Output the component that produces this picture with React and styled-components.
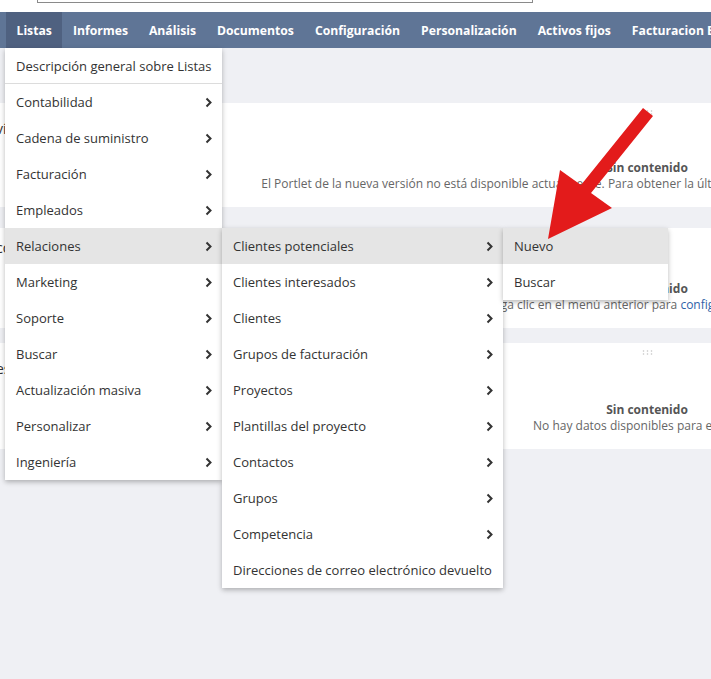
import React from "react";
import styled, { createGlobalStyle } from "styled-components";

const GlobalStyle = createGlobalStyle`
  html, body { margin: 0; padding: 0; overflow: hidden; background: #eff0f4; }
  body { font-family: "Open Sans", "Noto Sans", sans-serif; }
  * { box-sizing: border-box; }
`;

const Page = styled.div`
  position: relative;
  width: 711px;
  height: 679px;
  overflow: hidden;
  background: #eff0f4;
`;

const Header = styled.div`
  height: 12px;
  background: #ffffff;
  display: flex;
  align-items: flex-end;
  padding-left: 37px;
  overflow: hidden;
`;

const SearchBox = styled.div`
  width: 496px;
  height: 30px;
  flex: none;
  border: 1px solid #8a8a8a;
  margin-bottom: 9px;
  background: #fff;
`;

const NavBar = styled.nav`
  height: 36px;
  background: #5f7596;
  display: flex;
  padding-left: 6px;
  white-space: nowrap;
  position: relative;
  z-index: 5;
`;

const NavItem = styled.div`
  position: relative;
  display: flex;
  align-items: center;
  padding: 0 10.5px;
  color: #ffffff;
  font-weight: 700;
  font-size: 12.2px;
  background: ${(p) => (p.$active ? "#4f6180" : "transparent")};
`;

const Menu = styled.div`
  position: absolute;
  top: ${(p) => (p.$root ? "100%" : "0")};
  left: ${(p) => (p.$root ? "-1px" : "100%")};
  width: ${(p) => p.$width}px;
  background: #ffffff;
  box-shadow: 0 2px 5px rgba(0, 0, 0, 0.28);
  font-weight: 400;
  color: #333333;
  z-index: ${(p) => p.$z || 10};
`;

const Row = styled.div`
  position: relative;
  height: 36px;
  display: flex;
  align-items: center;
  justify-content: space-between;
  padding: 0 10px 0 11px;
  font-size: 13px;
  color: #333333;
  background: ${(p) => (p.$hover ? "#e5e5e5" : "#ffffff")};
  border-bottom: ${(p) => (p.$separated ? "1px solid #dcdcdc" : "none")};
`;

const Content = styled.main`
  display: flex;
  flex-direction: column;
  padding-top: 55px;
  width: 1294px;
`;

const Card = styled.section`
  position: relative;
  width: 1294px;
  height: ${(p) => p.$h}px;
  margin-bottom: ${(p) => p.$gap}px;
  background: #ffffff;
  display: flex;
  flex-direction: column;
  padding-bottom: 15px;
`;

const Dots = styled.div`
  display: flex;
  justify-content: center;
  padding-top: 7px;
  height: 11px;
`;

const CardTitle = styled.div`
  margin-top: ${(p) => p.$offset}px;
  margin-left: -4px;
  font-size: 14px;
  line-height: 20px;
  color: #333333;
`;

const Message = styled.div`
  margin-top: auto;
  text-align: center;
  font-size: 12px;
  line-height: 16px;
  color: #666666;
`;

const Empty = styled.div`
  font-weight: 700;
  color: #555555;
`;

const Link = styled.span`
  color: #2f62a8;
`;

const Overlay = styled.svg`
  position: absolute;
  left: 0;
  top: 0;
  pointer-events: none;
  z-index: 50;
`;

const Chevron = () => (
  <svg width="7" height="11" viewBox="0 0 7 11">
    <path d="M1.5 1.5 L5.5 5.5 L1.5 9.5" fill="none" stroke="#333" strokeWidth="2" strokeLinejoin="miter" />
  </svg>
);

const DragHandle = () => (
  <svg width="11" height="5" viewBox="0 0 11 5">
    {[1.5, 5.5, 9.5].map((x) =>
      [1, 4].map((y) => <circle key={`${x}-${y}`} cx={x} cy={y} r="0.8" fill="#c4c4c4" />)
    )}
  </svg>
);

const level3 = [
  { label: "Nuevo", hover: true },
  { label: "Buscar" },
];

const level2 = [
  { label: "Clientes potenciales", sub: true, hover: true, children: level3 },
  { label: "Clientes interesados", sub: true },
  { label: "Clientes", sub: true },
  { label: "Grupos de facturación", sub: true },
  { label: "Proyectos", sub: true },
  { label: "Plantillas del proyecto", sub: true },
  { label: "Contactos", sub: true },
  { label: "Grupos", sub: true },
  { label: "Competencia", sub: true },
  { label: "Direcciones de correo electrónico devuelto" },
];

const level1 = [
  { label: "Descripción general sobre Listas", separated: true },
  { label: "Contabilidad", sub: true },
  { label: "Cadena de suministro", sub: true },
  { label: "Facturación", sub: true },
  { label: "Empleados", sub: true },
  { label: "Relaciones", sub: true, hover: true, children: level2 },
  { label: "Marketing", sub: true },
  { label: "Soporte", sub: true },
  { label: "Buscar", sub: true },
  { label: "Actualización masiva", sub: true },
  { label: "Personalizar", sub: true },
  { label: "Ingeniería", sub: true },
];

const widths = [217, 281, 165];

function MenuList({ items, depth }) {
  return (
    <Menu $root={depth === 0} $width={widths[depth]} $z={10 + depth}>
      {items.map((it) => (
        <Row key={it.label} $hover={it.hover} $separated={it.separated}>
          <span>{it.label}</span>
          {it.sub && <Chevron />}
          {it.children && <MenuList items={it.children} depth={depth + 1} />}
        </Row>
      ))}
    </Menu>
  );
}

const navItems = [
  "Listas",
  "Informes",
  "Análisis",
  "Documentos",
  "Configuración",
  "Personalización",
  "Activos fijos",
  "Facturacion Electrónica",
];

export default function App() {
  return (
    <>
      <GlobalStyle />
      <Page>
        <Header>
          <SearchBox />
        </Header>
        <NavBar>
          {navItems.map((n, i) => (
            <NavItem key={n} $active={i === 0}>
              {n}
              {i === 0 && <MenuList items={level1} depth={0} />}
            </NavItem>
          ))}
        </NavBar>
        <Content>
          <Card $h={104} $gap={21}>
            <Dots><DragHandle /></Dots>
            <CardTitle $offset={5}>vínculos rápidos</CardTitle>
            <Message>
              <Empty>Sin contenido</Empty>
              El Portlet de la nueva versión no está disponible actualmente. Para obtener la última versión, comuníquese con el administrador de la red.
            </Message>
          </Card>
          <Card $h={100} $gap={15}>
            <Dots><DragHandle /></Dots>
            <CardTitle $offset={-1}>contactos recientes</CardTitle>
            <Message>
              <Empty>Sin contenido</Empty>
              Haga clic en el menú anterior para <Link>configurar este portlet.</Link>
            </Message>
          </Card>
          <Card $h={106} $gap={0}>
            <Dots><DragHandle /></Dots>
            <CardTitle $offset={5}>estadísticas</CardTitle>
            <Message>
              <Empty>Sin contenido</Empty>
              No hay datos disponibles para esta vista.
            </Message>
          </Card>
        </Content>
        <Overlay width="711" height="679" viewBox="0 0 711 679">
          <polygon
            points="643,108 653,116 591,193 612,208 548,239 560,170 581,185"
            fill="#e31b1b"
          />
        </Overlay>
      </Page>
    </>
  );
}
